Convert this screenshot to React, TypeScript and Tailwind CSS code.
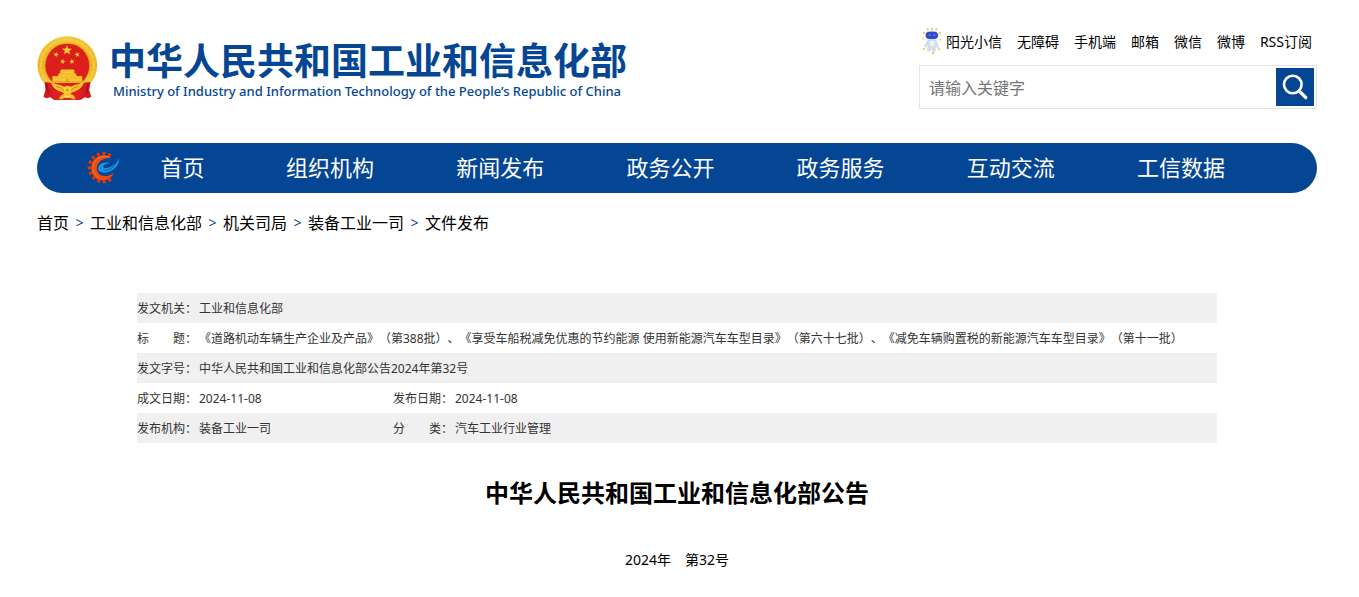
import React from 'react';

const topLinks = ['无障碍', '手机端', '邮箱', '微信', '微博', 'RSS订阅'];
const navItems = ['组织机构', '新闻发布', '政务公开', '政务服务', '互动交流', '工信数据'];
const crumbs = ['首页', '工业和信息化部', '机关司局', '装备工业一司', '文件发布'];

function starPoints(cx: number, cy: number, r: number, turn = 0) {
  return Array.from({ length: 10 }, (_, i) => {
    const a = ((i * 36 - 90 + turn) * Math.PI) / 180;
    const d = i % 2 ? r * 0.42 : r;
    return `${(cx + d * Math.cos(a)).toFixed(1)},${(cy + d * Math.sin(a)).toFixed(1)}`;
  }).join(' ');
}

function Emblem() {
  return (
    <svg viewBox="20 18 183 196" className="h-[65px] w-[61px] shrink-0" aria-hidden="true">
      <defs>
        <linearGradient id="gold" x1="0" y1="0" x2="0" y2="1">
          <stop offset="0" stopColor="#f3c63a" />
          <stop offset="0.5" stopColor="#eeb522" />
          <stop offset="1" stopColor="#f7d13e" />
        </linearGradient>
      </defs>
      <ellipse cx="111" cy="106" rx="90" ry="87" fill="url(#gold)" />
      <ellipse cx="111" cy="106" rx="80" ry="77" fill="none" stroke="#f6cf48" strokeWidth="5" strokeDasharray="14 3" />
      <ellipse cx="111" cy="106" rx="69" ry="68" fill="#e0a31a" />
      <circle cx="111" cy="107" r="66" fill="#dc1f1c" />
      <g fill="#f8c833">
        <polygon points={starPoints(110, 61, 16)} />
        <polygon points={starPoints(77, 74, 8.5, 12)} />
        <polygon points={starPoints(141, 74, 8.5, -12)} />
        <polygon points={starPoints(97, 95, 8.5, 10)} />
        <polygon points={starPoints(125, 95, 8.5, -10)} />
        <path d="M92 119h38l4 7H88zM88 129h46l5 7H83z" />
        <path d="M91 124h40v8H91zM84 133h54v7H84z" />
        <path d="M66 139h90v17H66z" />
      </g>
      <path d="M54 156h114v4H54z" fill="#efb62a" />
      <path d="M86 132h50v1.500H86zM70 144h82v1.500H70z" fill="#df9f1c" />
      <path d="M107 148h8v8h-8z" fill="#de9a18" />
      <path d="M42 157l15 1 29 13-6 16-10 23-10-7-13 3-8-5 6-20z" fill="#d31b20" />
      <path d="M181 157l-15 1-29 13 6 16 10 23 10-7 12 3 8-5-6-20z" fill="#d31b20" />
      <path d="M62 181h98l-9 30H71z" fill="#dc211e" />
      <path d="M49 162l4 30M173 162l-4 30" stroke="#a80f17" strokeWidth="5" fill="none" />
      <path d="M62 161q24 1 49 14 25-13 49-14-8 20-35 27l-14 14-14-14q-27-7-35-27z" fill="#f6c22b" />
      <path d="M77 170q18 2 24 14M145 170q-18 2-24 14" stroke="#d58b14" strokeWidth="3" fill="none" />
      <circle cx="111" cy="179" r="11" fill="#f9d13c" />
      <circle cx="111" cy="181" r="4" fill="#d99418" />
      <path d="M91 198q10-8 20-8t20 8l5 9q-8 5-15-2-10-5-20 0-7 7-15 2z" fill="#f4be29" />
      <path d="M103 198h16v6h-16z" fill="#fae06b" />
    </svg>
  );
}

function GearLogo() {
  return (
    <svg viewBox="21 12 99 99" className="h-[33px] w-[33px] shrink-0" aria-hidden="true">
      <path d="M92 26a42 42 0 1 0 2 70" fill="none" stroke="#e8320a" strokeWidth="10" strokeDasharray="9 8" />
      <path d="M93 32C76 18 43 24 35 52c-7 32 15 51 37 48 14-2 25-11 29-23-16 14-40 14-48-2-8-18 4-42 40-43z" fill="#f04a0c" />
      <path d="M86 30C65 23 42 36 39 58c-2 18 7 29 18 33" fill="none" stroke="#fb7a2b" strokeWidth="3" />
      <path d="M117 34c3 22-19 42-44 43-20 1-24-15-12-25 9-7 23-8 29-1-12-3-22 4-20 10 5 8 37-3 47-27z" fill="#2191dc" />
      <path d="M111 43c-6 17-23 28-40 27" fill="none" stroke="#0866b8" strokeWidth="3" />
    </svg>
  );
}

function Mascot() {
  return (
    <svg viewBox="0 0 60 84" className="h-[28px] w-[20px] shrink-0" aria-hidden="true">
      <g fill="#f7bf22">
        <circle cx="30" cy="5" r="3" />
        <circle cx="17" cy="7" r="3" />
        <circle cx="43" cy="7" r="3" />
        <circle cx="6" cy="18" r="3" />
        <circle cx="54" cy="18" r="3" />
        <circle cx="4" cy="36" r="2.5" />
        <circle cx="55" cy="38" r="2.5" />
        <circle cx="6" cy="66" r="3" />
        <circle cx="52" cy="67" r="3" />
        <circle cx="33" cy="78" r="3.5" />
      </g>
      <ellipse cx="30" cy="25" rx="21" ry="16" fill="#dbe2f5" />
      <path d="M17 39q13-5 26 0l8 20-4 6-6-7v14l-7 6-6-12-5 8-8-2 2-17-7 8-4-6z" fill="#d3dcec" />
      <path d="M24 42h13l-1 16h-11z" fill="#edf2fa" />
      <rect x="11" y="14" width="37" height="22" rx="11" fill="#3149c6" />
      <ellipse cx="23" cy="24" rx="4" ry="3" fill="#5578e4" />
      <ellipse cx="37" cy="24" rx="4" ry="3" fill="#5578e4" />
    </svg>
  );
}

function SearchIcon() {
  return (
    <svg viewBox="0 0 38 38" className="h-[38px] w-[38px]" aria-hidden="true">
      <circle cx="16.8" cy="16.5" r="8.8" fill="none" stroke="#fff" strokeWidth="2.6" />
      <path d="M23.2 23l6.500 6.500" stroke="#fff" strokeWidth="3.2" strokeLinecap="round" />
    </svg>
  );
}

const labelCell = 'px-0 pt-[2px] pb-0 text-left font-normal whitespace-nowrap';
const valueCell = 'px-0 pt-[2px] pb-0 whitespace-nowrap';

export default function App() {
  return (
    <div
      lang="zh-CN"
      className="bg-white pr-[5px] font-['Noto_Sans','Noto_Sans_CJK_SC',sans-serif] text-black [text-spacing-trim:space-all]"
    >
      <div className="mx-auto max-w-[1280px]">
        <header className="flex items-start justify-between pt-[27px]">
          <a href="#" className="flex items-start gap-[11px] pt-[9px] text-[#054694]">
            <Emblem />
            <span className="flex flex-col pt-[3px] whitespace-nowrap">
              <span className="text-[37px] leading-[44px] font-bold">中华人民共和国工业和信息化部</span>
              <span className="pl-[4px] text-[13px] leading-[16px] font-medium">
                Ministry of Industry and Information Technology of the People’s Republic of China
              </span>
            </span>
          </a>
          <div className="w-[398px]">
            <nav className="flex h-[28px] items-center justify-end gap-[15px] pr-[5px] text-[14px] whitespace-nowrap">
              <a href="#" className="flex items-center gap-[4px]">
                <Mascot />
                阳光小信
              </a>
              {topLinks.map((t) => (
                <a key={t} href="#">{t}</a>
              ))}
            </nav>
            <form className="mt-[10px] flex h-[44px] border border-[#e4e4e4] p-[2px]">
              <input
                type="text"
                aria-label="请输入关键字"
                placeholder="请输入关键字"
                className="min-w-0 flex-1 px-[7px] pt-[2px] text-[16px] outline-none placeholder:text-[#757575]"
              />
              <button type="button" aria-label="搜索" className="h-[38px] w-[38px] bg-[#054694]">
                <SearchIcon />
              </button>
            </form>
          </div>
        </header>

        <nav className="mt-[34px] flex h-[50px] items-center rounded-full bg-[#054694] pr-[51px] pb-[1px] pl-[50px] text-[22px] text-white">
          <GearLogo />
          <a href="#" className="w-[125px] text-center">首页</a>
          {navItems.map((t) => (
            <a key={t} href="#" className="flex-1 text-center whitespace-nowrap">{t}</a>
          ))}
        </nav>

        <nav className="mt-[18px] flex h-[24px] items-center text-[16px] leading-[24px]">
          {crumbs.map((t, i) => (
            <React.Fragment key={t}>
              {i > 0 && <span className="w-[21px] text-center text-[14px] text-[#054694]">&gt;</span>}
              <a href="#">{t}</a>
            </React.Fragment>
          ))}
        </nav>

        <main className="mx-auto mt-[58px] max-w-[1080px]">
          <table className="w-full table-fixed border-collapse text-[12px] leading-[28px] text-[#333]">
            <colgroup>
              <col className="w-[62px]" />
              <col className="w-[194px]" />
              <col className="w-[62px]" />
              <col />
            </colgroup>
            <tbody>
              <tr className="bg-[#f0f0f0]">
                <th className={labelCell}>发文机关：</th>
                <td colSpan={3} className={valueCell}>工业和信息化部</td>
              </tr>
              <tr>
                <th className={labelCell}>标　　题：</th>
                <td colSpan={3} className={valueCell}>
                  《道路机动车辆生产企业及产品》（第388批）、《享受车船税减免优惠的节约能源 使用新能源汽车车型目录》（第六十七批）、《减免车辆购置税的新能源汽车车型目录》（第十一批）
                </td>
              </tr>
              <tr className="bg-[#f0f0f0]">
                <th className={labelCell}>发文字号：</th>
                <td colSpan={3} className={valueCell}>中华人民共和国工业和信息化部公告2024年第32号</td>
              </tr>
              <tr>
                <th className={labelCell}>成文日期：</th>
                <td className={valueCell}>2024-11-08</td>
                <th className={labelCell}>发布日期：</th>
                <td className={valueCell}>2024-11-08</td>
              </tr>
              <tr className="bg-[#f0f0f0]">
                <th className={labelCell}>发布机构：</th>
                <td className={valueCell}>装备工业一司</td>
                <th className={labelCell}>分　　类：</th>
                <td className={valueCell}>汽车工业行业管理</td>
              </tr>
            </tbody>
          </table>
          <h1 className="mt-[32px] text-center text-[24px] leading-[36px] font-bold">中华人民共和国工业和信息化部公告</h1>
          <p className="mt-[37px] pb-[25px] text-center text-[14px] leading-[24px]">2024年　第32号</p>
        </main>
      </div>
    </div>
  );
}
